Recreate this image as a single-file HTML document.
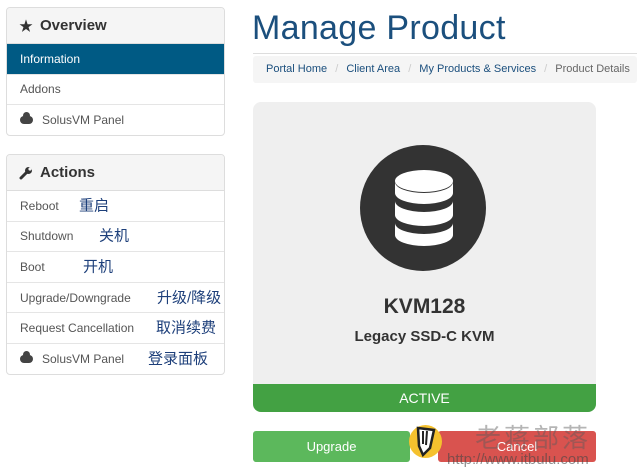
<!DOCTYPE html>
<html><head><meta charset="utf-8"><style>
*{box-sizing:border-box;margin:0;padding:0}
body{width:637px;height:470px;background:#fff;font-family:"Liberation Sans","Noto Sans CJK SC",sans-serif;position:relative;overflow:hidden;color:#333}
.p{position:absolute;left:6px;width:219px;border:1px solid #ddd;border-radius:4px;background:#fff;overflow:hidden}
.h{height:36px;background:#f5f5f5;border-bottom:1px solid #ddd;font-size:15px;font-weight:bold;color:#333;padding:9px 12px;display:flex;align-items:center;gap:7px}
.r{height:30.6px;border-bottom:1px solid #e5e5e5;font-size:12px;color:#555;padding-left:13px;display:flex;align-items:center;position:relative}
.r:last-child{border-bottom:none}
.a{background:#005a84;color:#fff}
.zh{position:absolute;color:#1d3f7a;font-size:15px;top:50%;transform:translateY(-50%);line-height:1}
.cloud{display:inline-block;width:13px;height:8px;background:#444;border-radius:5px;margin-right:9px;position:relative}
.cloud:before{content:"";position:absolute;left:3px;top:-4px;width:7px;height:7px;border-radius:50%;background:#444}
</style></head><body>
<div class="p" style="top:7px;height:129px">
<div class="h"><span style="font-size:14px">★</span>Overview</div>
<div class="r a">Information</div>
<div class="r">Addons</div>
<div class="r"><span class="cloud"></span>SolusVM Panel</div>
</div>
<div class="p" style="top:154px;height:221px">
<div class="h"><svg width="14" height="14" viewBox="0 0 14 14"><path d="M2 12 L8 6" stroke="#333" stroke-width="3" stroke-linecap="round"/><circle cx="9.5" cy="4.5" r="3.5" fill="#333"/><circle cx="11" cy="3" r="1.6" fill="#f5f5f5"/></svg>Actions</div>
<div class="r">Reboot<span class="zh" style="left:72px">重启</span></div>
<div class="r">Shutdown<span class="zh" style="left:92px">关机</span></div>
<div class="r">Boot<span class="zh" style="left:76px">开机</span></div>
<div class="r">Upgrade/Downgrade<span class="zh" style="left:150px">升级/降级</span></div>
<div class="r">Request Cancellation<span class="zh" style="left:149px">取消续费</span></div>
<div class="r"><span class="cloud"></span>SolusVM Panel<span class="zh" style="left:141px">登录面板</span></div>
</div>
<div style="position:absolute;left:252px;top:9px;font-size:34px;color:#1b4f7d;letter-spacing:0.3px">Manage Product</div>
<div style="position:absolute;left:253px;top:53px;width:384px;border-top:1px solid #ddd"></div>
<div style="position:absolute;left:253px;top:56px;width:384px;height:27px;background:#f5f5f5;border-radius:3px;font-size:11px;padding:7px 13px;color:#1b4f7d;white-space:nowrap">Portal Home <span style="color:#ccc;margin:0 5px">/</span> Client Area <span style="color:#ccc;margin:0 5px">/</span> My Products &amp; Services <span style="color:#ccc;margin:0 5px">/</span> <span style="color:#666">Product Details</span></div>
<div style="position:absolute;left:253px;top:102px;width:343px;height:310px;background:#efefef;border-radius:8px;overflow:hidden">
<div style="position:absolute;left:107px;top:43px;width:126px;height:126px;border-radius:50%;background:#333"></div>
<svg style="position:absolute;left:141px;top:67px" width="60" height="80" viewBox="0 0 60 80">
<ellipse cx="30" cy="12" rx="29" ry="11" fill="#fff"/>
<path d="M1 13 V24 A29 11 0 0 0 59 24 V13 A29 11 0 0 1 1 13Z" fill="#fff"/>
<path d="M1 32 V46 A29 11 0 0 0 59 46 V32 A29 11 0 0 1 1 32Z" fill="#fff"/>
<path d="M1 54 V66 A29 11 0 0 0 59 66 V54 A29 11 0 0 1 1 54Z" fill="#fff"/>
</svg>
<div style="position:absolute;left:0;width:343px;top:193px;text-align:center;font-size:21px;font-weight:bold;color:#333">KVM128</div>
<div style="position:absolute;left:0;width:343px;top:226px;text-align:center;font-size:15px;font-weight:bold;color:#333">Legacy SSD-C KVM</div>
<div style="position:absolute;left:0;bottom:0;width:343px;height:28px;background:#43a143;color:#fff;text-align:center;font-size:14px;line-height:28px">ACTIVE</div>
</div>
<div style="position:absolute;left:253px;top:431px;width:157px;height:31px;background:#5cb85c;border-radius:3px;color:#fff;font-size:13px;text-align:center;line-height:31px">Upgrade</div>
<div style="position:absolute;left:438px;top:431px;width:158px;height:31px;background:#d9534f;border-radius:3px;color:#fff;font-size:13px;text-align:center;line-height:31px">Cancel</div>
<div style="position:absolute;left:409px;top:425px;width:33px;height:33px;border-radius:50%;background:#f5c12e"></div>
<svg style="position:absolute;left:415px;top:426px" width="22" height="32" viewBox="0 0 22 32"><path d="M3 2 L19 4 L15 22 L8 29 L4 20 Z" fill="#fff" stroke="#222" stroke-width="2.5"/><path d="M8 5 L8 18 M12 5 L11 19" stroke="#222" stroke-width="2"/></svg>
<div style="position:absolute;left:475px;top:418px;font-size:26px;color:rgba(90,90,90,0.45);letter-spacing:3px">老蒋部落</div>
<div style="position:absolute;left:447px;top:451px;font-size:15px;color:rgba(70,70,70,0.6)">http://www.itbulu.com</div>
</body></html>
